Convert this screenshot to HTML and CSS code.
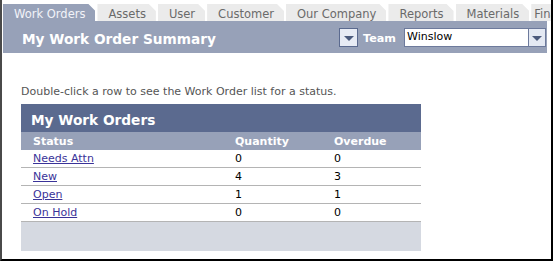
FILE: index.html
```html
<!DOCTYPE html>
<html lang="en">
<head>
<meta charset="utf-8">
<title>My Work Order Summary</title>
<link rel="stylesheet" href="styles.css">
</head>
<body>
<div class="frame">
  <div class="tabs">
    <div class="tab active">Work Orders</div>
    <div class="tab">Assets</div>
    <div class="tab">User</div>
    <div class="tab">Customer</div>
    <div class="tab">Our Company</div>
    <div class="tab">Reports</div>
    <div class="tab">Materials</div>
    <div class="tab last">Financials</div>
  </div>
  <div class="header">
    <div class="title">My Work Order Summary</div>
    <div class="controls">
      <div class="btn"><span class="tri"></span></div>
      <div class="team">Team</div>
      <div class="select">
        <div class="select-value">Winslow</div>
        <div class="select-btn"><span class="tri"></span></div>
      </div>
    </div>
  </div>
  <div class="content">
    <p class="hint">Double-click a row to see the Work Order list for a status.</p>
    <div class="panel">
      <div class="panel-title">My Work Orders</div>
      <div class="grid head">
        <div class="c1">Status</div>
        <div>Quantity</div>
        <div>Overdue</div>
      </div>
      <div class="grid row">
        <div class="c1"><a href="#">Needs Attn</a></div>
        <div>0</div>
        <div>0</div>
      </div>
      <div class="grid row">
        <div class="c1"><a href="#">New</a></div>
        <div>4</div>
        <div>3</div>
      </div>
      <div class="grid row">
        <div class="c1"><a href="#">Open</a></div>
        <div>1</div>
        <div>1</div>
      </div>
      <div class="grid row">
        <div class="c1"><a href="#">On Hold</a></div>
        <div>0</div>
        <div>0</div>
      </div>
      <div class="panel-foot"></div>
    </div>
  </div>
</div>
</body>
</html>
```
FILE: styles.css
```css
* { box-sizing: border-box; }
html, body { margin: 0; padding: 0; background: #fff; }
body {
  font-family: "DejaVu Sans", Verdana, sans-serif;
  font-size: 11px;
  overflow: hidden;
}
.frame {
  width: 553px;
  height: 261px;
  border-left: 2px solid #4a4a4a;
  border-right: 2px solid #000;
  border-bottom: 2px solid #000;
  overflow: hidden;
}
.tabs {
  display: flex;
  padding: 4px 0 0 1px;
  gap: 2px;
  white-space: nowrap;
  overflow: hidden;
}
.tab {
  flex: none;
  height: 17px;
  padding: 3px 10px 0 11px;
  line-height: 14px;
  font-size: 11.5px;
  color: #6a6a6a;
  background: #ebebeb;
  clip-path: polygon(0 0, calc(100% - 7px) 0, 100% 7px, 100% 100%, 0 100%);
}
.tab.last {
  padding-left: 3px;
}
.tab.active {
  background: #97a1b8;
  color: #f2f3f8;
}
.header {
  display: flex;
  align-items: center;
  justify-content: space-between;
  height: 32px;
  margin: 0 4px 0 1px;
  padding: 0 1px 0 19px;
  background: #97a1b8;
}
.title {
  margin-top: 3px;
  font-size: 13.7px;
  font-weight: bold;
  color: #fff;
  line-height: 16px;
}
.controls {
  display: flex;
  align-items: center;
  margin-top: 1px;
}
.btn {
  width: 19px;
  height: 19px;
  border: 1px solid #5b6a8f;
  background: #e7ebf4;
  display: flex;
  align-items: center;
  justify-content: center;
}
.tri {
  width: 0;
  height: 0;
  border-left: 5px solid transparent;
  border-right: 5px solid transparent;
  border-top: 5px solid #4b5a7c;
  margin-top: 1px;
}
.team {
  margin: 0 8px 0 5px;
  font-weight: bold;
  color: #fff;
  font-size: 11.2px;
  padding-top: 2px;
}
.select {
  display: flex;
  width: 142px;
  height: 19px;
  border: 1px solid #6d7a9c;
  background: #fff;
}
.select-value {
  flex: 1;
  padding-left: 2px;
  line-height: 15px;
  color: #000;
}
.select-btn {
  width: 17px;
  border-left: 1px solid #6d7a9c;
  background: #e4e9f3;
  display: flex;
  align-items: center;
  justify-content: center;
}
.content {
  padding: 32px 0 0 19px;
}
.hint {
  margin: 0 0 6px;
  line-height: 13px;
  color: #555;
}
.panel {
  width: 400px;
}
.panel-title {
  height: 28px;
  padding: 8px 10px 0;
  line-height: 16px;
  font-size: 13.7px;
  font-weight: bold;
  color: #fff;
  background: #5b6a8f;
}
.grid {
  display: grid;
  grid-template-columns: 214px 99px 1fr;
}
.grid .c1 { padding-left: 12px; }
.head {
  height: 18px;
  padding-top: 1px;
  line-height: 17px;
  font-weight: bold;
  color: #fff;
  background: #97a1b8;
}
.row {
  height: 18px;
  line-height: 17px;
  border-bottom: 1px solid #b4b4b4;
  color: #000;
}
.row a {
  color: #3a3399;
  text-decoration: underline;
}
.panel-foot {
  height: 29px;
  background: #d5d9e1;
}
```
